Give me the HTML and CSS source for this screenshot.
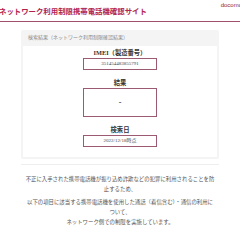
FILE: index.html
```html
<!DOCTYPE html>
<html lang="ja">
<head>
    <meta charset="UTF-8">
    <meta name="viewport" content="width=device-width, initial-scale=1.0">
    <title>ネットワーク利用制限携帯電話機確認サイト</title>
    <link rel="stylesheet" href="styles.css">
</head>
<body>
    <header class="header">
        <h1 class="site-title">ネットワーク利用制限携帯電話機確認サイト</h1>
        <span class="brand">docomo</span>
    </header>

    <div class="result-panel">
        <div class="panel-head">検索結果（ネットワーク利用制限確認結果）</div>
        <div class="panel-body">
            <div class="field">
                <div class="field-label">IMEI（製造番号）</div>
                <div class="field-box">351454483855791</div>
            </div>
            <div class="field">
                <div class="field-label">結果</div>
                <div class="field-box result-box">-</div>
            </div>
            <div class="field">
                <div class="field-label">検索日</div>
                <div class="field-box">2022/12/18時点</div>
            </div>
        </div>
    </div>

    <hr class="divider">

    <div class="notice">
        <p>不正に入手された携帯電話機が振り込め詐欺などの犯罪に利用されることを防<br>止するため、</p>
        <p>以下の項目に該当する携帯電話機を使用した通話（着信含む）・通信の利用に<br>ついて、<br>ネットワーク側での制限を実施しています。</p>
    </div>
</body>
</html>
```

FILE: styles.css
```css
body{
    margin: 0;
    font-family: "Liberation Serif", "Noto Sans CJK JP", serif;
    background: #fff;
    color: #333;
}
.header{
    display: flex;
    justify-content: space-between;
    align-items: flex-start;
    height: 21px;
    border-bottom: 1px solid #a0506c;
}
.site-title{
    margin: 6px 0 0 -1px;
    font-family: "Noto Sans CJK JP", sans-serif;
    font-size: 7.4px;
    line-height: 9px;
    font-weight: bold;
    color: #b3234d;
    white-space: nowrap;
}
.brand{
    margin: 2px -2px 0 0;
    font-family: "Liberation Sans", sans-serif;
    font-size: 6px;
    color: #8c2846;
}
.result-panel{
    margin: 8px 21px 0 21px;
    background: #f4f4f4;
    padding: 0 2px 2px 2px;
    border-radius: 2px;
}
.panel-head{
    height: 13px;
    padding: 3px 0 0 5px;
    font-family: "Noto Sans CJK JP", sans-serif;
    font-size: 5px;
    line-height: 8px;
    color: #8a8a8a;
}
.panel-body{
    background: #fff;
    padding: 2px 0 10px;
    display: flex;
    flex-direction: column;
    align-items: center;
    gap: 8px;
}
.field{
    display: flex;
    flex-direction: column;
    align-items: center;
}
.field-label{
    font-family: "Liberation Serif", "Noto Sans CJK JP", serif;
    font-size: 6.3px;
    line-height: 9px;
    font-weight: bold;
    color: #333;
    margin-bottom: 1px;
}
.field-box{
    width: 72px;
    height: 10px;
    border: 1px solid #9c5a72;
    text-align: center;
    font-size: 5px;
    line-height: 10px;
    color: #444;
}
.result-box{
    height: 27px;
    line-height: 27px;
    font-size: 8px;
    font-weight: bold;
}
.divider{
    margin: 5px 21px 0;
    border: 0;
    border-top: 1px solid #eee;
}
.notice{
    margin: 9px 18px 0;
    text-align: center;
    font-family: "Noto Sans CJK JP", serif;
    font-size: 5.4px;
    line-height: 10px;
    color: #555;
}
.notice p{
    margin: 0 0 3px;
}
```
